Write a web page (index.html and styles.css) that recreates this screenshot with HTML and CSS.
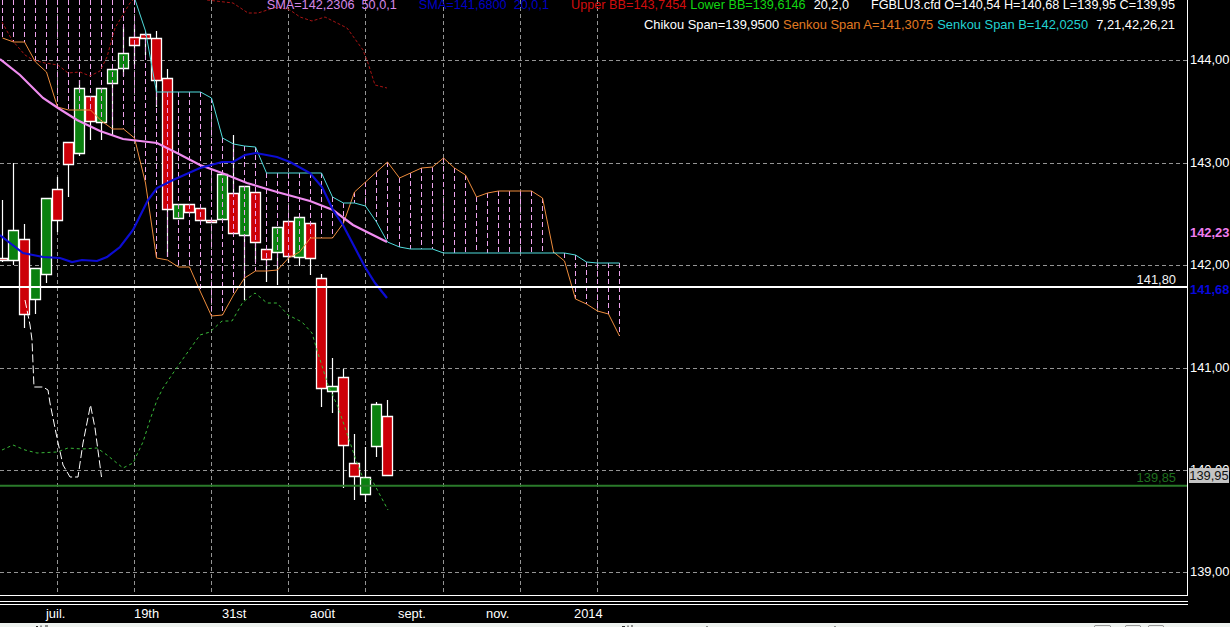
FILE: index.html
```html
<!DOCTYPE html>
<html lang="fr">
<head>
<meta charset="utf-8">
<title>FGBLU3.cfd</title>
<link rel="stylesheet" href="styles.css">
</head>
<body>
<main class="terminal">
  <section class="chart-row">
    <div class="plot">
      <svg class="plot-svg" width="1187" height="595" viewBox="0 0 1187 595" aria-hidden="true">
        <path class="grid" d="M0 60.5H1187M0 163.5H1187M0 265.5H1187M0 368.5H1187M0 470.5H1187M0 572.5H1187M57.5 0V594M134.5 0V594M211.5 0V594M288.5 0V594M365.5 0V594M443.5 0V594M520.5 0V594M597.5 0V594"/>
        <path class="wick" d="M2.5 200V262M13.5 163V265M24.5 224V328M35.5 268V314M46.5 198V283M57.5 177V232M68.5 142V197M79.5 80V156M90.5 96V140M101.5 88V140M112.5 69V135M123.5 27V76M134.5 25V65M145.5 34V55M156.5 31V107M167.5 69V257M233.5 135V233M222.5 174V219M244.5 186V300M255.5 192V262M266.5 249V282M277.5 227V285M288.5 221V263M299.5 217V266M310.5 223V275M321.5 274V407M332.5 358V413M343.5 369V488M354.5 434V500M365.5 447V502M376.5 402V457M387.5 400V475"/>
        <path class="body-red" d="M-2.5 258.5H7.5V260.5H-2.5ZM19.5 239.5H29.5V314.5H19.5ZM52.5 189.5H62.5V220.5H52.5ZM63.5 142.5H73.5V164.5H63.5ZM85.5 96.5H95.5V121.5H85.5ZM129.5 37.5H139.5V45.5H129.5ZM140.5 34.5H150.5V38.5H140.5ZM151.5 38.5H161.5V80.5H151.5ZM162.5 78.5H172.5V209.5H162.5ZM184.5 204.5H194.5V212.5H184.5ZM195.5 208.5H205.5V220.5H195.5ZM206.5 220.5H216.5V222.5H206.5ZM228.5 193.5H238.5V233.5H228.5ZM250.5 192.5H260.5V242.5H250.5ZM261.5 249.5H271.5V259.5H261.5ZM283.5 221.5H293.5V256.5H283.5ZM305.5 223.5H315.5V258.5H305.5ZM316.5 278.5H326.5V388.5H316.5ZM338.5 377.5H348.5V445.5H338.5ZM349.5 463.5H359.5V476.5H349.5ZM382.5 416.5H392.5V475.5H382.5Z"/>
        <path class="body-green" d="M8.5 230.5H18.5V260.5H8.5ZM30.5 268.5H40.5V299.5H30.5ZM41.5 198.5H51.5V274.5H41.5ZM74.5 88.5H84.5V153.5H74.5ZM96.5 88.5H106.5V122.5H96.5ZM107.5 69.5H117.5V83.5H107.5ZM118.5 53.5H128.5V68.5H118.5ZM173.5 204.5H183.5V218.5H173.5ZM217.5 174.5H227.5V219.5H217.5ZM239.5 186.5H249.5V235.5H239.5ZM272.5 227.5H282.5V252.5H272.5ZM294.5 217.5H304.5V257.5H294.5ZM327.5 386.5H337.5V391.5H327.5ZM360.5 477.5H370.5V494.5H360.5ZM371.5 404.5H381.5V446.5H371.5Z"/>
        <path class="kumo" d="M2.5 0V38M13.5 0V42M24.5 0V42M35.5 0V62M46.5 0V72M57.5 0V107M68.5 0V110M79.5 0V110M90.5 0V110M101.5 0V121M112.5 0V129M123.5 0V129M134.5 0V138M145.5 31V183M156.5 92V258M167.5 92V260M178.5 92V267M189.5 92V267M200.5 92V292M211.5 98V316M222.5 138V315M233.5 144V295M244.5 146V278M255.5 147V271M266.5 173V271M277.5 173V270M288.5 173V258M299.5 173V252M310.5 173V238M321.5 173V238M332.5 197V238M343.5 203V223M354.5 192V203M365.5 182V206M376.5 172V222M387.5 162V242M399.5 178V247M410.5 173V249M421.5 168V249M432.5 167V249M443.5 158V253M454.5 168V253M465.5 175V253M476.5 197V253M487.5 193V253M498.5 191V253M509.5 191V253M520.5 191V253M531.5 191V253M542.5 198V253M553.5 252V253M564.5 253V261M575.5 255V299M586.5 262V304M597.5 263V311M608.5 263V314M619.5 263V336"/>
        <polyline class="bb-upper" points="2,22 12,40 25,55 33,60 45,63 58,65 68,73 80,72 90,76 100,71 107,57 115,28 130,3 134,-1"/>
        <polyline class="bb-upper" points="207,0 233,3 248,13 258,13 277,7 290,10 300,17 312,21 325,17 347,28 363,50 368,63 375,85 387,88"/>
        <polyline class="bb-lower" points="2,450 13,445 25,450 37,453 57,452 68,448 82,449 97,448 107,455 123,468 133,463 143,442 150,420 157,400 163,388 180,363 200,335 210,332 222,321 232,321 243,302 255,293 267,303 277,303 288,315 302,322 312,333 317,350 328,385 338,407 357,463 363,478 372,480 388,510"/>
        <polyline class="chikou" points="25,300 30,325 32,340 34,387 43,387 48,390 50,403 57,438 63,465 70,477 78,477 83,443 90.5,405 95,428 101.5,477"/>
        <polyline class="senkou-a" points="2.5,38 13.5,42 24.5,42 35.5,62 46.5,72 57.5,107 68.5,110 79.5,110 90.5,110 101.5,121 112.5,129 123.5,129 134.5,138 145.5,183 156.5,258 167.5,260 178.5,267 189.5,267 200.5,292 211.5,316 222.5,315 233.5,295 244.5,278 255.5,271 266.5,271 277.5,270 288.5,258 299.5,252 310.5,238 321.5,238 332.5,238 343.5,223 354.5,192 365.5,182 376.5,172 387.5,162 399.5,178 410.5,173 421.5,168 432.5,167 443.5,158 454.5,168 465.5,175 476.5,197 487.5,193 498.5,191 531.5,191 542.5,198 553.5,252 564.5,261 575.5,299 586.5,304 597.5,311 608.5,314 619.5,336"/>
        <polyline class="senkou-b" points="134.5,-2 145.5,31 156.5,92 200.5,92 211.5,98 222.5,138 233.5,144 244.5,146 255.5,147 266.5,173 321.5,173 332.5,197 343.5,203 354.5,203 365.5,206 376.5,222 387.5,242 399.5,247 410.5,249 432.5,249 443.5,253 564.5,253 575.5,255 586.5,262 597.5,263 619.5,263"/>
        <polyline class="sma-50" points="0,59 20,75 43,98 58,108 77,120 100,131 123,139 157,143 177,153 200,165 222,173 247,183 277,192 310,201 333,210 353,225 387,242"/>
        <polyline class="sma-20" points="0,235 10,243 23,253 43,257 60,258 72,262 82,260 97,261 107,257 120,247 133,230 148,200 157,188 173,180 200,168 222,162 233,162 245,155 256,153 277,157 290,162 310,173 322,187 333,210 343,225 365,267 375,283 387,298"/>
        <path class="level-white" d="M0 287H1187"/>
        <path class="level-green" d="M0 485.7H1187"/>
      </svg>

      <div class="legend">
        <div class="legend-row legend-row-top">
          <span class="c-pink">SMA=142,2306  50,0,1</span>
          <span class="c-blue wide">SMA=141,6800  20,0,1</span>
          <span class="c-red wide">Upper BB=143,7454</span>
          <span class="c-green near">Lower BB=139,6146</span>
          <span class="c-white mid">20,2,0</span>
          <span class="c-white wide">FGBLU3.cfd O=140,54 H=140,68 L=139,95 C=139,95</span>
        </div>
        <div class="legend-row">
          <span class="c-white">Chikou Span=139,9500</span>
          <span class="c-orange near">Senkou Span A=141,3075</span>
          <span class="c-cyan near">Senkou Span B=142,0250</span>
          <span class="c-white mid">7,21,42,26,21</span>
        </div>
      </div>

      <span class="level-label level-label-white">141,80</span>
      <span class="level-label level-label-green">139,85</span>
    </div>

    <aside class="price-axis">
      <span class="price" style="top:52px">144,00</span>
      <span class="price" style="top:155px">143,00</span>
      <span class="price price-pink" style="top:225px">142,23</span>
      <span class="price" style="top:257px">142,00</span>
      <span class="price price-blue" style="top:282px">141,68</span>
      <span class="price" style="top:360px">141,00</span>
      <span class="price" style="top:462px">140,00</span>
      <span class="price price-last" style="top:468px">139,95</span>
      <span class="price" style="top:564px">139,00</span>
    </aside>
  </section>

  <section class="timeline">
    <div class="timeline-rule"></div>
    <div class="timeline-rule"></div>
    <div class="timeline-labels">
      <span>juil.</span>
      <span>19th</span>
      <span>31st</span>
      <span>août</span>
      <span>sept.</span>
      <span>nov.</span>
      <span>2014</span>
    </div>
  </section>

  <footer class="toolbar">
    <svg class="toolbar-svg" width="1230" height="4" viewBox="0 0 1230 4" aria-hidden="true">
      <path class="tool-mark" d="M36 3.5H38M41 2.5V4M45 3H48M622 3.5H625M628 2.5V4M631 3H633M707 3V4M835 3V4"/>
      <path class="tool-button" d="M1094.5 4V3Q1094.5 2.5 1096 2.5H1109Q1110.5 2.5 1110.5 3V4M1125.5 4V3Q1125.5 2.5 1127 2.5H1139Q1140.5 2.5 1140.5 3V4M1148.5 4V3Q1148.5 2.5 1150 2.5H1162Q1163.5 2.5 1163.5 3V4"/>
    </svg>
  </footer>
</main>
</body>
</html>
```
FILE: styles.css
```css
html, body {
  margin: 0;
  padding: 0;
  background: #000;
}

.terminal {
  width: 1230px;
  height: 627px;
  overflow: hidden;
  display: flex;
  flex-direction: column;
  background: #000;
  color: #fff;
  font-family: "Liberation Sans", Arial, sans-serif;
  font-size: 12.9px;
}

/* Chart row */
.chart-row {
  display: flex;
  flex: none;
  height: 596px;
}

.plot {
  position: relative;
  flex: none;
  width: 1187px;
  height: 595px;
  overflow: hidden;
  border-right: 1px solid #fff;
  border-bottom: 1px solid #fff;
}

.plot-svg {
  display: block;
  fill: none;
}

.grid {
  stroke: #949494;
  stroke-width: 1;
  stroke-dasharray: 4 3;
}

.wick {
  stroke: #fff;
  stroke-width: 1.2;
}

.body-red,
.body-green {
  stroke: #fff;
  stroke-width: 1.3;
}

.body-red { fill: #cc0008; }
.body-green { fill: #0a800f; }

.kumo {
  stroke: #eea4ee;
  stroke-width: 1;
  stroke-dasharray: 5 3;
}

.bb-upper {
  stroke: #a81414;
  stroke-width: 1;
  stroke-dasharray: 3 2;
}

.bb-lower {
  stroke: #38b838;
  stroke-width: 1;
  stroke-dasharray: 3 3;
}

.chikou {
  stroke: #fff;
  stroke-width: 1;
  stroke-dasharray: 8 3;
}

.senkou-a {
  stroke: #ee8c3c;
  stroke-width: 1;
}

.senkou-b {
  stroke: #4fdcdc;
  stroke-width: 1;
}

.sma-50 {
  stroke: #f08cf0;
  stroke-width: 2.2;
}

.sma-20 {
  stroke: #0c0cd2;
  stroke-width: 2.2;
}

.level-white {
  stroke: #fff;
  stroke-width: 2;
}

.level-green {
  stroke: #2a7a2a;
  stroke-width: 2;
}

/* Legend over the plot */
.legend {
  position: absolute;
  top: -4px;
  right: 12px;
  display: flex;
  flex-direction: column;
  line-height: 19px;
  white-space: pre;
}

.legend-row {
  display: flex;
  justify-content: flex-end;
}

.legend-row-top {
  font-size: 12.7px;
}

.wide { margin-left: 22px; }
.mid { margin-left: 8px; }
.near { margin-left: 4px; }

.c-pink { color: #d588e8; }
.c-blue { color: #0000c4; }
.c-red { color: #d00d0d; }
.c-green { color: #12d612; }
.c-white { color: #fff; }
.c-orange { color: #e07a22; }
.c-cyan { color: #22d2d2; }

.level-label {
  position: absolute;
  right: 11px;
  line-height: 14px;
}

.level-label-white {
  top: 273px;
  color: #f4f4f4;
}

.level-label-green {
  top: 471px;
  color: #1f6f1f;
}

/* Right-hand price scale */
.price-axis {
  position: relative;
  flex: 1;
  overflow: hidden;
}

.price {
  position: absolute;
  left: 2px;
  line-height: 16px;
  white-space: nowrap;
}

.price-pink {
  color: #f07ef0;
  font-weight: 700;
}

.price-blue {
  color: #0808dc;
  font-weight: 700;
}

.price-last {
  left: 1px;
  width: 40px;
  height: 15px;
  line-height: 15px;
  text-align: center;
  background: #c4c4c4;
  color: #111;
}

/* Time scale */
.timeline {
  flex: none;
  height: 27px;
  padding-top: 5px;
  box-sizing: border-box;
}

.timeline-rule {
  width: 1188px;
  height: 1px;
  margin-bottom: 2px;
  background: #fff;
}

.timeline-labels {
  display: flex;
  padding-left: 46px;
  line-height: 15px;
  margin-top: -1px;
}

.timeline-labels span {
  flex: none;
  width: 88px;
}

/* Window toolbar, cut off by the bottom edge */
.toolbar {
  flex: none;
  height: 4px;
  background: #eef2ef;
}

.toolbar-svg {
  display: block;
  fill: none;
}

.tool-mark {
  stroke: #333;
  stroke-width: 1;
}

.tool-button {
  stroke: #999;
  stroke-width: 1;
}
```
